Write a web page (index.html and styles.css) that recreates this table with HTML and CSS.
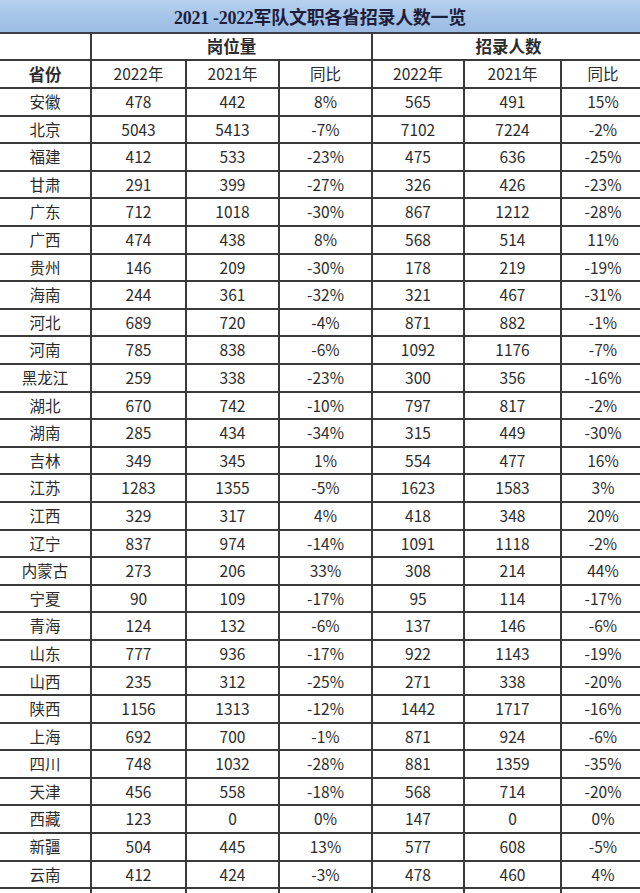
FILE: index.html
```html
<!DOCTYPE html>
<html lang="zh">
<head>
<meta charset="utf-8">
<title>2021-2022军队文职各省招录人数一览</title>
<link rel="stylesheet" href="styles.css">
</head>
<body>
<div class="sheet">
  <div class="title">2021 -2022军队文职各省招录人数一览</div>
  <div class="row head1">
    <div class="c"></div>
    <div class="c span3 bold">岗位量</div>
    <div class="c span3 bold">招录人数</div>
  </div>
  <div class="row head2">
    <div class="c bold">省份</div>
    <div class="c">2022年</div><div class="c">2021年</div><div class="c">同比</div>
    <div class="c">2022年</div><div class="c">2021年</div><div class="c">同比</div>
  </div>
  <div id="body"></div>
</div>
<script src="app.js"></script>
</body>
</html>
```
FILE: app.js
```js
const data = [
["安徽",478,442,"8%",565,491,"15%"],
["北京",5043,5413,"-7%",7102,7224,"-2%"],
["福建",412,533,"-23%",475,636,"-25%"],
["甘肃",291,399,"-27%",326,426,"-23%"],
["广东",712,1018,"-30%",867,1212,"-28%"],
["广西",474,438,"8%",568,514,"11%"],
["贵州",146,209,"-30%",178,219,"-19%"],
["海南",244,361,"-32%",321,467,"-31%"],
["河北",689,720,"-4%",871,882,"-1%"],
["河南",785,838,"-6%",1092,1176,"-7%"],
["黑龙江",259,338,"-23%",300,356,"-16%"],
["湖北",670,742,"-10%",797,817,"-2%"],
["湖南",285,434,"-34%",315,449,"-30%"],
["吉林",349,345,"1%",554,477,"16%"],
["江苏",1283,1355,"-5%",1623,1583,"3%"],
["江西",329,317,"4%",418,348,"20%"],
["辽宁",837,974,"-14%",1091,1118,"-2%"],
["内蒙古",273,206,"33%",308,214,"44%"],
["宁夏",90,109,"-17%",95,114,"-17%"],
["青海",124,132,"-6%",137,146,"-6%"],
["山东",777,936,"-17%",922,1143,"-19%"],
["山西",235,312,"-25%",271,338,"-20%"],
["陕西",1156,1313,"-12%",1442,1717,"-16%"],
["上海",692,700,"-1%",871,924,"-6%"],
["四川",748,1032,"-28%",881,1359,"-35%"],
["天津",456,558,"-18%",568,714,"-20%"],
["西藏",123,0,"0%",147,0,"0%"],
["新疆",504,445,"13%",577,608,"-5%"],
["云南",412,424,"-3%",478,460,"4%"],
["浙江","","","","","",""]
];
const body = document.getElementById("body");
for (const r of data) {
  const row = document.createElement("div");
  row.className = "row data";
  for (const v of r) {
    const c = document.createElement("div");
    c.className = "c";
    c.textContent = v;
    row.appendChild(c);
  }
  body.appendChild(row);
}
```
FILE: styles.css
```css
html, body {
  margin: 0;
  padding: 0;
  overflow: hidden;
  background: #fff;
}
.sheet {
  width: 646px;
  color: #2b2b2b;
  font-family: "Noto Sans CJK SC", sans-serif;
}
.title {
  height: 34px;
  box-sizing: border-box;
  border-bottom: 2px solid #3c3c48;
  background: linear-gradient(to bottom, #b7d0ee 0%, #a3c3e8 60%, #9cbde4 100%);
  display: flex;
  align-items: center;
  justify-content: center;
  padding-right: 6px;
  font-family: "Liberation Serif", "Noto Sans CJK SC", serif;
  font-weight: bold;
  font-size: 18px;
  color: #1e1e3c;
  letter-spacing: -0.3px;
}
.row {
  display: grid;
  grid-template-columns: 92px 95px 93px 93px 92px 97px 84px;
  box-sizing: border-box;
  border-bottom: 2px solid #3a3a3a;
}
.head1 { height: 27px; }
.head2 { height: 28px; }
.data { height: 27.6px; }
.c {
  display: flex;
  align-items: center;
  justify-content: center;
  border-right: 2px solid #3a3a3a;
  font-size: 15.5px;
  line-height: 1;
  white-space: nowrap;
}
.c:first-child { border-right-width: 2px; }
.span3 { grid-column: span 3; }
.bold { font-weight: bold; font-size: 16.5px; }
```
